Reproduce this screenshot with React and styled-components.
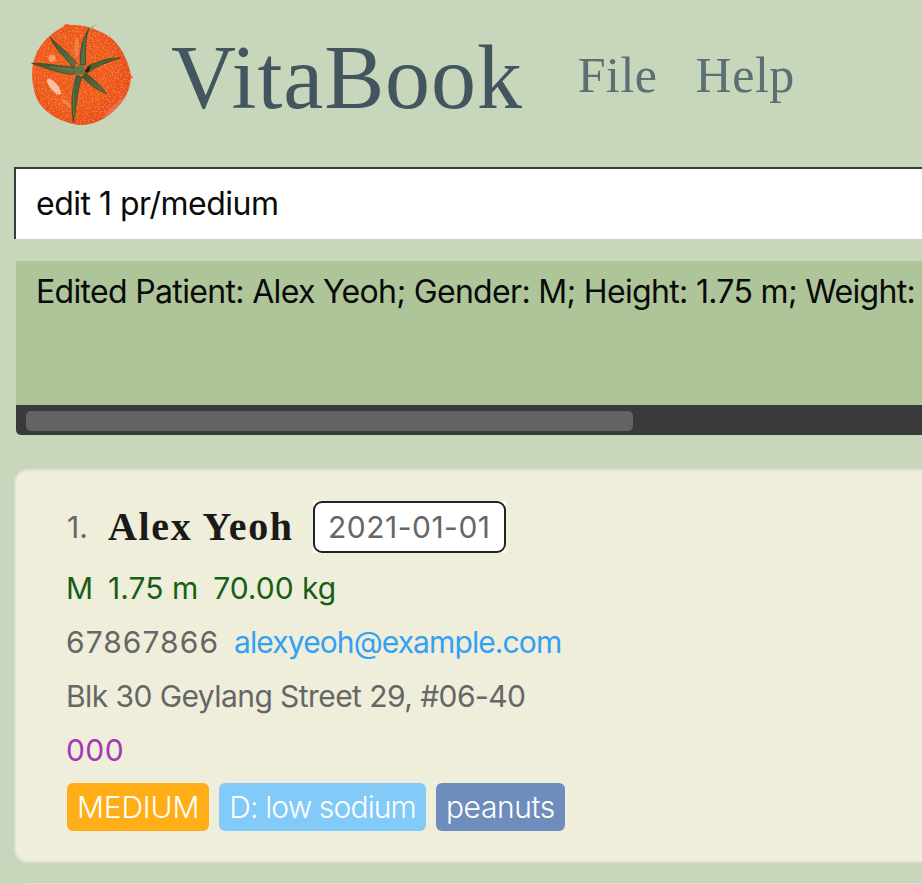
import React from 'react';
import styled, { createGlobalStyle } from 'styled-components';

const Global = createGlobalStyle`
  html, body { margin: 0; padding: 0; background: #c8d6bc; }
  body { width: 922px; height: 884px; overflow: hidden; font-family: Inter, "Liberation Sans", sans-serif; }
`;

const Page = styled.div`
  width: 922px;
  height: 884px;
  overflow: hidden;
  display: flex;
  flex-direction: column;
  background: #c8d6bc;
`;

const Header = styled.header`
  height: 167px;
  flex: none;
  display: flex;
  align-items: flex-start;
  padding: 20px 0 0 30px;
  box-sizing: border-box;
`;

const Logo = styled.svg`
  width: 105px;
  height: 110px;
  flex: none;
`;

const Title = styled.h1`
  margin: 3px 0 0 36px;
  font: 400 90px/110px "Liberation Serif", serif;
  letter-spacing: 0.9px;
  color: #43565f;
`;

const Menu = styled.nav`
  display: flex;
  gap: 38px;
  margin: 27px 0 0 55px;
`;

const MenuItem = styled.span`
  font: 400 50px/56px "Liberation Serif", serif;
  letter-spacing: 0.5px;
  color: #5b7073;
`;

const CommandBox = styled.div`
  flex: none;
  width: 960px;
  height: 72px;
  margin-left: 14px;
  box-sizing: border-box;
  background: #fff;
  border-top: 2px solid #3b3b3b;
  border-left: 2px solid #3b3b3b;
  padding-left: 20px;
  font-size: 32px;
  line-height: 69px;
  letter-spacing: -0.5px;
  color: #0a0a0a;
`;

const ResultPane = styled.div`
  flex: none;
  width: 960px;
  margin: 22px 0 0 16px;
  border-radius: 0 0 0 5px;
  overflow: hidden;
`;

const ResultText = styled.div`
  height: 144px;
  box-sizing: border-box;
  background: #aec59a;
  padding: 10px 0 0 20px;
  font-size: 32px;
  line-height: 42px;
  letter-spacing: -0.67px;
  color: #0a0a0a;
  white-space: nowrap;
`;

const ScrollTrack = styled.div`
  height: 30px;
  box-sizing: border-box;
  background: #3a3a3a;
  padding: 6px 0 4px 10px;
`;

const ScrollThumb = styled.div`
  width: 607px;
  height: 20px;
  background: #636363;
  border-radius: 5px;
`;

const Card = styled.article`
  flex: none;
  width: 960px;
  box-sizing: border-box;
  margin: 34px 0 0 14px;
  height: 394px;
  padding: 30px 0 0 51px;
  background: #efeedb;
  border: 2px solid #e0e0d9;
  border-radius: 14px;
`;

const NameRow = styled.div`
  display: flex;
  align-items: center;
  height: 52px;
  margin-bottom: 8px;
`;

const Index = styled.span`
  font-size: 30px;
  color: #666;
  width: 41px;
`;

const Name = styled.span`
  font: 700 40px/52px "Liberation Serif", serif;
  letter-spacing: 1.67px;
  color: #1a1a18;
`;

const DateChip = styled.span`
  margin-left: 19px;
  height: 52px;
  width: 193px;
  background: #fff;
`;

const DateText = styled.span`
  display: block;
  height: 100%;
  box-sizing: border-box;
  border: 2px solid #222;
  border-radius: 9px;
  font-size: 30px;
  line-height: 48px;
  text-align: center;
  letter-spacing: 0.5px;
  color: #666;
`;

const Row = styled.div`
  display: flex;
  gap: ${p => p.$gap || 15}px;
  height: 54px;
  margin-left: -1px;
  align-items: center;
  font-size: 30px;
  letter-spacing: ${p => p.$ls ?? -0.55}px;
  color: ${p => p.$color || '#666'};
`;

const Phone = styled.span`
  letter-spacing: 1.05px;
`;

const Email = styled.span`
  color: #33a0f3;
  letter-spacing: -0.9px;
`;

const Tags = styled.div`
  display: flex;
  gap: 10px;
  margin-top: 6px;
`;

const Tag = styled.span`
  height: 48px;
  padding: 0 10px;
  border-radius: 6px;
  background: ${p => p.$bg};
  color: #fff;
  font-size: 30px;
  font-weight: 300;
  line-height: 48px;
  letter-spacing: ${p => p.$ls}px;
`;

const NextCard = styled.div`
  flex: none;
  width: 960px;
  height: 60px;
  margin: 20px 0 0 14px;
  background: #efeedb;
  border: 2px solid #e0e0d9;
  border-radius: 14px;
`;

const Tomato = () => (
  <Logo viewBox="0 0 315 330" aria-label="VitaBook logo">
    <defs>
      <radialGradient id="skin" cx="0.42" cy="0.45" r="0.62">
        <stop offset="0" stopColor="#ef5a1e" />
        <stop offset="0.55" stopColor="#ee5a1e" />
        <stop offset="0.85" stopColor="#e84c1b" />
        <stop offset="1" stopColor="#ef6a42" />
      </radialGradient>
      <linearGradient id="leaf" x1="0" y1="0" x2="1" y2="1">
        <stop offset="0" stopColor="#3f5530" />
        <stop offset="1" stopColor="#5e7448" />
      </linearGradient>
      <filter id="spk" x="0" y="0" width="100%" height="100%">
        <feTurbulence type="fractalNoise" baseFrequency="0.22" numOctaves="2" seed="7" />
        <feColorMatrix values="0 0 0 0 1  0 0 0 0 0.5  0 0 0 0 0.15  0 0 0 8 -4.3" />
      </filter>
      <clipPath id="shape">
        <path d="M110 15C150 12 190 22 232 46C270 70 292 115 303 165C304 205 285 245 245 278C215 305 175 318 140 314C95 305 50 285 25 245C5 205 0 150 15 110C30 70 65 35 110 15Z" />
      </clipPath>
    </defs>
    <ellipse cx="110" cy="18" rx="9" ry="6" fill="#ee6a2c" />
    <circle cx="305" cy="172" r="4" fill="#ee7a3c" />
    <g clipPath="url(#shape)">
      <rect width="315" height="330" fill="url(#skin)" />
      <rect width="315" height="330" filter="url(#spk)" opacity="0.4" />
      <ellipse cx="72" cy="200" rx="30" ry="11" fill="#fbd6c0" opacity="0.8" transform="rotate(50 72 200)" />
      <circle cx="66" cy="115" r="11" fill="#f8a472" opacity="0.9" />
      <ellipse cx="140" cy="82" rx="7" ry="32" fill="#f79a66" opacity="0.45" />
      <ellipse cx="110" cy="250" rx="20" ry="5" fill="#f6a880" opacity="0.5" transform="rotate(40 110 250)" />
      <ellipse cx="265" cy="268" rx="62" ry="20" fill="#f0856a" opacity="0.5" transform="rotate(-42 265 268)" />
    </g>
    <path d="M175 28L200 10L181 30Z" fill="#a9a27a" />
    <g fill="url(#leaf)" stroke="#33451f" strokeWidth="2" strokeLinejoin="round">
      <path d="M60 50C80 75 115 95 140 130L127 140C105 110 75 90 60 50Z" />
      <path d="M178 24C165 50 168 95 166 135L150 135C150 95 155 55 178 24Z" />
      <path d="M272 113C235 113 200 125 170 140L176 156C205 135 240 125 272 113Z" />
      <path d="M165 158C190 175 215 200 230 222C205 212 175 192 157 172Z" />
      <path d="M140 165C125 200 122 260 130 308C140 265 140 215 156 172Z" />
      <path d="M5 130C50 128 100 142 135 140L135 163C90 163 50 145 5 130Z" />
    </g>
    <path d="M162 152L184 134L174 160Z" fill="#1b2413" />
    <ellipse cx="150" cy="150" rx="16" ry="14" fill="#5e7746" />
    <path d="M138 150C120 150 90 145 60 140M158 130C158 105 160 80 166 55M134 172C130 210 130 250 131 285" stroke="#7f9660" strokeWidth="2" fill="none" opacity="0.7" />
  </Logo>
);

export default function App() {
  return (
    <>
      <Global />
      <Page>
        <Header>
          <Tomato />
          <Title>VitaBook</Title>
          <Menu>
            <MenuItem>File</MenuItem>
            <MenuItem>Help</MenuItem>
          </Menu>
        </Header>
        <CommandBox>edit 1 pr/medium</CommandBox>
        <ResultPane>
          <ResultText>Edited Patient: Alex Yeoh; Gender: M; Height: 1.75 m; Weight:</ResultText>
          <ScrollTrack><ScrollThumb /></ScrollTrack>
        </ResultPane>
        <Card>
          <NameRow>
            <Index>1.</Index>
            <Name>Alex Yeoh</Name>
            <DateChip><DateText>2021-01-01</DateText></DateChip>
          </NameRow>
          <Row $color="#175e17" $ls={0}><span>M</span><span>1.75 m</span><span>70.00 kg</span></Row>
          <Row><Phone>67867866</Phone><Email>alexyeoh@example.com</Email></Row>
          <Row $ls={-0.57}>Blk 30 Geylang Street 29, #06-40</Row>
          <Row $color="#a238b4" $ls={0.4}>000</Row>
          <Tags>
            <Tag $bg="#ffae17" $ls={-0.2}>MEDIUM</Tag>
            <Tag $bg="#82caf8" $ls={-0.85}>D: low sodium</Tag>
            <Tag $bg="#6e8dbd" $ls={-0.4}>peanuts</Tag>
          </Tags>
        </Card>
        <NextCard />
      </Page>
    </>
  );
}
